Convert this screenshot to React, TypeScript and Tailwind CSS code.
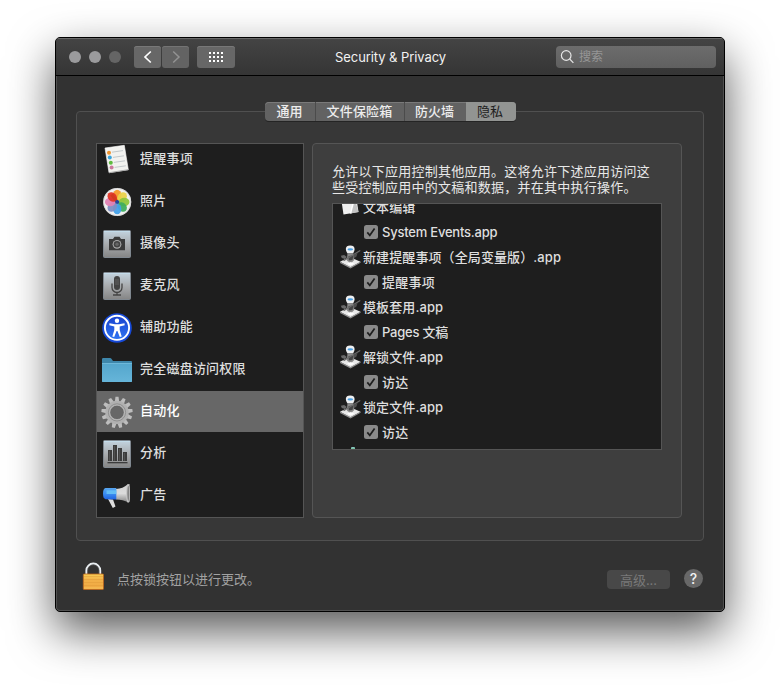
import type { ReactNode } from "react";

function RemindersIcon() {
  return (
    <>
      <path d="M4 4 23.3 1.3 27.3 25.7 8 28.7Z" fill="#f2f2ef" stroke="#fff" strokeWidth=".6" />
      <path d="M8 28.7 27.3 25.7" stroke="#a9a9a9" strokeWidth="1" />
      <g stroke="#b5bcc0" strokeWidth=".8">
        <path d="M11 8.2 22 6.6M12 13.4 23 11.8M12.8 18.4 24 16.8M13.6 23.4 24.8 21.8" />
      </g>
      <circle cx="8" cy="8.7" r="2" fill="#ee9430" />
      <circle cx="8.8" cy="13.6" r="2" fill="#38a4dc" />
      <circle cx="9.8" cy="18.7" r="2" fill="#5fbb3f" />
      <circle cx="10.6" cy="23.6" r="2" fill="#c97a9c" />
    </>
  );
}

const petals = ["#f59a28", "#ead24a", "#8fc63c", "#3fae5f", "#43a0e8", "#7d8fc4", "#e082b4", "#df3526"];

function PhotosIcon() {
  return (
    <>
      <circle cx="16.2" cy="16" r="14" fill="#f1f1f1" />
      <circle cx="16.2" cy="16" r="13.6" fill="none" stroke="#c9c9c9" strokeWidth=".6" />
      {petals.map((c, i) => (
        <ellipse key={c} cx="16.2" cy="9" rx="4.2" ry="5.3" fill={c} fillOpacity=".95" transform={`rotate(${i * 45} 16.2 16)`} />
      ))}
      <path d="M16.2 16 10.500 8.500" stroke="#d23b1e" strokeWidth="3" />
      <circle cx="16.2" cy="16" r="2.1" fill="#23459c" />
    </>
  );
}

function Plate() {
  return (
    <>
      <rect x="2.5" y="2.5" width="27" height="27" rx="1" fill="url(#plate)" stroke="#808890" />
      <path d="M3 3.5H29" stroke="#c3dcea" />
    </>
  );
}

function CameraIcon() {
  return (
    <>
      <Plate />
      <path d="M8 11h4l1.5-2.2h5L20 11h4v11.2H8Z" fill="#3b3b3b" />
      <circle cx="16" cy="16.3" r="4.4" fill="#a9a9a9" />
      <circle cx="16" cy="16.3" r="3.3" fill="#444" />
      <circle cx="16" cy="16.3" r="1.7" fill="#666" />
    </>
  );
}

function MicIcon() {
  return (
    <>
      <Plate />
      <rect x="13" y="6" width="6" height="14" rx="3" fill="#424242" />
      <path d="M14 10h4M14 12h4M14 14h4" stroke="#777" strokeWidth=".6" />
      <path d="M11 13.5v4a5 5 0 0 0 10 0v-4M16 22.5v2.7M12 25h8" fill="none" stroke="#444" strokeWidth="1.3" />
    </>
  );
}

function AccessibilityIcon() {
  return (
    <>
      <circle cx="16" cy="16" r="14.8" fill="#1649d8" />
      <circle cx="16" cy="15.8" r="12.1" fill="url(#blue)" stroke="#fff" strokeWidth="1.9" />
      <circle cx="16" cy="8.8" r="2.2" fill="#fff" />
      <path d="M8.5 11.3 14 12.2h4l5.5-.9.2 1.9-5 1.2v3.5l2 6.5-1.9.6L16.4 19h-.8l-2.4 6-1.9-.6 2-6.5v-3.5l-5-1.2Z" fill="#fff" />
    </>
  );
}

function FolderIcon() {
  return (
    <>
      <path d="M1 28V5.2Q1 4 2.2 4H9q1 0 1.8 1.2L12 7h18q1 0 1 1v20Z" fill="#3e87ab" />
      <path d="M1 9.2H31V27q0 1-1 1H2q-1 0-1-1Z" fill="url(#folder)" />
      <path d="M1 9.5H31" stroke="#7bc3e2" strokeWidth=".7" />
    </>
  );
}

const teeth = Array.from({ length: 13 }, (_, i) => (i * 360) / 13);

function GearIcon() {
  return (
    <>
      {teeth.map((a) => (
        <path key={a} d="M13.8 5.8 14.5.8h3l.7 5Z" fill="#bdbdbd" transform={`rotate(${a} 16 16.4)`} />
      ))}
      <circle cx="16" cy="16.4" r="9.4" fill="none" stroke="#b0b0b0" strokeWidth="4.6" />
      <circle cx="16" cy="16.4" r="8.6" fill="none" stroke="#8f8f8f" strokeWidth="1" />
      <circle cx="16" cy="16.4" r="7.2" fill="none" stroke="#c4c4c4" strokeWidth=".6" />
    </>
  );
}

function AnalyticsIcon() {
  return (
    <>
      <Plate />
      <path d="M7 12h4v11H7ZM12 7h4v16h-4ZM17 10h4v13h-4ZM22 14h4v9h-4Z" fill="#3c3c3c" />
      <path d="M8.5 13v10M13.5 8v15M18.5 11v12M23.5 15v8" stroke="#555" strokeWidth=".8" />
      <path d="M6.500 24.700H26.500" stroke="#333" strokeWidth="1.2" />
    </>
  );
}

function MegaphoneIcon() {
  return (
    <>
      <path d="M7 19 12 19.500 14.500 26.500 11.800 28Z" fill="#dedede" />
      <path d="M15 9Q22 8.500 26.500 4.500L28.500 4 29 21.500 27.500 22.800Q22 19.500 15 19.500Z" fill="url(#horn)" />
      <ellipse cx="27" cy="13.400" rx="1.900" ry="9.300" fill="#c6c6c6" />
      <ellipse cx="27.300" cy="13.400" rx="1" ry="7.600" fill="#858585" />
      <path d="M4.500 8Q2 8.500 2 13.500T4.500 19.200L15.300 19.600V8Z" fill="url(#cap)" />
      <path d="M5.500 10.300H15.300V14H5.500Z" fill="#63bdf6" />
    </>
  );
}

function AutomatorIcon() {
  return (
    <svg className="h-6 w-[22px] shrink-0" viewBox="0 0 22 24">
      <path d="M0 16.800 8 12.800 13 13.500 20.600 16.800 10.500 22.600Z" fill="#e9e9e9" />
      <path d="M0 16.800 10.500 22 20.600 16.800V17.800L10.500 23.600 0 17.900Z" fill="#8f8f8f" />
      <path d="M7.500 8.500h6l.8 6.500-3.500 3.500-4-3Z" fill="#8b8b8b" />
      <path d="M8.500 11 13.500 10.500 12.500 15 8.800 15.500Z" fill="#444" />
      <path d="M.8 10.800 4.200 10 6.800 12 5 14 1.800 13Z" fill="#6a6a6a" />
      <path d="M4 15.500 19.800 5.800" stroke="#6a6a6a" strokeWidth="1.300" strokeLinecap="round" />
      <path d="M13.800 9.800 17.500 7.800 16.500 11.500 13.500 13.500Z" fill="#505050" />
      <path d="M5.800 4Q6 .6 10.200.6T14.600 4Q14.600 5.800 13.200 8.300H7.300Q5.800 6 5.800 4Z" fill="#eef0f2" />
      <ellipse cx="10.300" cy="4.400" rx="2.800" ry="1.100" fill="#4a9fe4" />
      <path d="M7.700 8.800h5.200" stroke="#888" />
      <path d="M7 18.800 10.800 17 14.500 18.800 10.700 20.600Z" fill="#fff" />
    </svg>
  );
}

function TextEditIcon() {
  return (
    <svg className="h-6 w-[22px] shrink-0" viewBox="0 0 22 24">
      <path d="M1.500 6 16.500 4 18.500 17 3.500 19.500Z" fill="#efefef" />
      <path d="M14.500 3 18.500 17 10.500 18.500Z" fill="#c3c3c3" />
      <path d="M13.500 7 10.500 18.500" stroke="#fff" strokeWidth="1.500" />
    </svg>
  );
}

function Defs() {
  return (
    <svg className="absolute h-0 w-0">
      <defs>
        <linearGradient id="plate" x2="0" y2="1">
          <stop stopColor="#c3d4e0" />
          <stop offset=".5" stopColor="#a8abae" />
          <stop offset="1" stopColor="#858585" />
        </linearGradient>
        <linearGradient id="blue" x2="0" y2="1">
          <stop stopColor="#1942ce" />
          <stop offset="1" stopColor="#2f74f2" />
        </linearGradient>
        <linearGradient id="folder" x2="0" y2="1">
          <stop stopColor="#54a6cc" />
          <stop offset="1" stopColor="#66b5d9" />
        </linearGradient>
        <linearGradient id="horn" x2="0" y2="1">
          <stop stopColor="#d0d0d0" />
          <stop offset=".5" stopColor="#dcdcdc" />
          <stop offset="1" stopColor="#808080" />
        </linearGradient>
        <linearGradient id="cap" x2="0" y2="1">
          <stop stopColor="#58a6ee" />
          <stop offset=".5" stopColor="#3b8df2" />
          <stop offset="1" stopColor="#1f62e0" />
        </linearGradient>
        <linearGradient id="brass" x2="0" y2="1">
          <stop stopColor="#f7cf58" />
          <stop offset=".4" stopColor="#f2b048" />
          <stop offset="1" stopColor="#f0a842" />
        </linearGradient>
      </defs>
    </svg>
  );
}

const services: { label: string; icon: ReactNode; selected?: boolean }[] = [
  { label: "提醒事项", icon: <RemindersIcon /> },
  { label: "照片", icon: <PhotosIcon /> },
  { label: "摄像头", icon: <CameraIcon /> },
  { label: "麦克风", icon: <MicIcon /> },
  { label: "辅助功能", icon: <AccessibilityIcon /> },
  { label: "完全磁盘访问权限", icon: <FolderIcon /> },
  { label: "自动化", icon: <GearIcon />, selected: true },
  { label: "分析", icon: <AnalyticsIcon /> },
  { label: "广告", icon: <MegaphoneIcon /> },
];

const apps = [
  { name: "文本编辑", target: "System Events.app", icon: <TextEditIcon />, latin: true },
  { name: "新建提醒事项（全局变量版）.app", target: "提醒事项", icon: <AutomatorIcon /> },
  { name: "模板套用.app", target: "Pages 文稿", icon: <AutomatorIcon />, latin: true },
  { name: "解锁文件.app", target: "访达", icon: <AutomatorIcon /> },
  { name: "锁定文件.app", target: "访达", icon: <AutomatorIcon /> },
];

function TitleBar() {
  return (
    <header className="flex h-[38px] items-center border-b border-black bg-linear-to-b from-[#444444] to-[#353535] shadow-[inset_0_1px_0_#686868]">
      <div className="ml-[13px] flex gap-2">
        <span className="size-3 rounded-full bg-[#9b9b9d]" />
        <span className="size-3 rounded-full bg-[#9b9b9d]" />
        <span className="size-3 rounded-full bg-[#656565]" />
      </div>
      <div className="ml-[13px] flex gap-px">
        <button className="flex h-[22px] w-[27px] items-center justify-center rounded-[3px] bg-[#676767] shadow-[inset_0_1px_0_#787878]">
          <svg className="size-4" viewBox="0 0 16 16" fill="none" stroke="#fff" strokeWidth="1.700">
            <path d="M10.800 2.500 5 8l5.800 5.500" />
          </svg>
        </button>
        <button className="flex h-[22px] w-[27px] items-center justify-center rounded-[3px] bg-[#636363] shadow-[inset_0_1px_0_#747474]">
          <svg className="size-4" viewBox="0 0 16 16" fill="none" stroke="#929292" strokeWidth="1.500">
            <path d="M5.200 2.500 11 8l-5.800 5.500" />
          </svg>
        </button>
      </div>
      <button className="ml-2 flex h-[22px] w-[38px] items-center justify-center rounded-[3px] bg-[#676767] shadow-[inset_0_1px_0_#787878]">
        <svg className="h-[10px] w-[14px]" viewBox="0 0 14 10" stroke="#fff" strokeWidth="2" strokeDasharray="2 2">
          <path d="M0 1h14M0 5h14M0 9h14" />
        </svg>
      </button>
      <h1 className="ml-[100px] w-[111px] pt-[2px] text-[13px] font-normal tracking-[-0.07px] whitespace-nowrap text-[#f2f2f2]">Security &amp; Privacy</h1>
      <div className="mr-2 ml-auto flex h-[22px] w-[160px] items-center rounded-[4px] bg-linear-to-b from-[#6c6c6c] to-[#606060] pl-[4px] text-[12px] text-[#969696]">
        <svg className="mr-1 size-[15px]" viewBox="0 0 15 15" fill="none" stroke="#e5e5e5" strokeWidth="1.200">
          <circle cx="6.200" cy="6.500" r="4.800" />
          <path d="m9.700 10 3.700 3.800" />
        </svg>
        <span className="pt-px">搜索</span>
      </div>
    </header>
  );
}

function Tabs() {
  return (
    <nav className="mx-auto -mt-[10px] flex h-[19px] w-[251px] overflow-hidden rounded-[4px] bg-[#626262] text-[13px] leading-[19px] font-medium text-[#ececec] shadow-[0_1px_0_#242424,inset_0_1px_0_#7a7a7a]">
      <span className="w-[51px] border-r border-[#4b4b4b] text-center">通用</span>
      <span className="w-[89px] border-r border-[#4b4b4b] text-center tracking-[0.2px]">文件保险箱</span>
      <span className="w-[61px] pr-px text-center">防火墙</span>
      <span className="w-[50px] bg-[#929492] pr-px text-center font-normal text-[#202020]">隐私</span>
    </nav>
  );
}

function Sidebar() {
  return (
    <aside className="h-[375px] w-[208px] overflow-hidden border border-[#555555] bg-[#1e1e1e]">
      <ul className="-mt-[5px]">
        {services.map((s) => (
          <li key={s.label} className={s.selected ? "mb-px flex h-[41px] bg-[#676767] text-white" : "mb-px flex h-[41px] text-[#dedede]"}>
            <svg className="mt-[5px] ml-[4px] size-8 shrink-0" viewBox="0 0 32 32">
              {s.icon}
            </svg>
            <span className="ml-[7px] text-[13px] leading-[39px] font-medium tracking-[0.22px]">{s.label}</span>
          </li>
        ))}
      </ul>
    </aside>
  );
}

function PrivacyPane() {
  return (
    <section className="h-[375px] w-[370px] rounded-[4px] border border-[#555555] bg-[#3e3e3e] pl-[19px]">
      <p className="mt-[19px] text-[13px] leading-4 tracking-[0.25px] whitespace-nowrap text-[#e8e8e8]">
        允许以下应用控制其他应用。这将允许下述应用访问这
        <br />
        些受控制应用中的文稿和数据，并在其中执行操作。
      </p>
      <div className="mt-[8px] h-[247px] w-[330px] overflow-hidden border border-[#555555] bg-[#1e1e1e] text-[13px] font-medium text-[#dedede]">
        <div className="-mt-[9px]">
          {apps.map((a) => (
            <div key={a.name}>
              <div className="flex h-[25px] pl-[7px] leading-[25px]">
                {a.icon}
                <span className="ml-[1px] tracking-[0.1px]">{a.name}</span>
              </div>
              <div className="flex h-[25px] items-center pl-[31px]">
                <svg className="mr-1 -mt-px size-[14px]" viewBox="0 0 14 14">
                  <rect width="14" height="14" rx="2.500" fill="#8a8a8a" />
                  <path d="M3.300 7.400 5.800 10.300 10.600 3.500" fill="none" stroke="#1e1e1e" strokeWidth="1.700" />
                </svg>
                <span className={a.latin ? "tracking-[-0.22px]" : "tracking-[0.25px]"}>{a.target}</span>
              </div>
            </div>
          ))}
          <span className="mt-[2px] ml-[18px] block h-1 w-1 rounded-t-[1px] bg-linear-to-b from-[#8fc4cf] to-[#55c152]" />
        </div>
      </div>
    </section>
  );
}

function Footer() {
  return (
    <footer className="flex h-[70px] items-start pr-[20px] pl-[24px]">
      <svg className="mt-[20px] h-[30px] w-[24px]" viewBox="0 0 24 30">
        <path d="M5.400 14V9.500a6.900 6.900 0 0 1 13.800 0V14" fill="none" stroke="#e9eef1" strokeWidth="2" />
        <path d="M6.600 14V9.500a5.700 5.700 0 0 1 11.400 0V14" fill="none" stroke="#666" strokeWidth=".6" />
        <rect x="2.300" y="13" width="20.200" height="15.500" rx=".8" fill="url(#brass)" stroke="#bd651b" strokeWidth=".8" />
        <path d="M3 15.500h19M3 18.500h19M3 21.500h19M3 24.500h19" stroke="#e09a38" strokeWidth=".5" />
        <path d="M3 27h19" stroke="#f6c45e" />
      </svg>
      <p className="mt-[28px] ml-[12px] text-[13px] leading-5 text-[#a2a2a2]">点按锁按钮以进行更改。</p>
      <button className="mt-[29px] ml-auto h-[19px] w-[63px] rounded-[4px] bg-[#484848] text-[13px] leading-[18px] text-[#797979]">高级...</button>
      <button className="mt-[28px] ml-[14px] size-[19px] rounded-full bg-[#686868] text-[14px] leading-[19px] font-medium text-[#f2f2f2]">?</button>
    </footer>
  );
}

export default function App() {
  return (
    <div className="flex h-[685px] w-[780px] overflow-hidden bg-white pt-[37px] pl-[55px] font-['Inter','Noto_Sans_CJK_SC',sans-serif]">
      <Defs />
      <main className="h-[575px] w-[670px] rounded-[5px] border border-black bg-[#323232] shadow-[0_19px_46px_rgba(0,0,0,0.66)]">
        <div className="h-full overflow-hidden rounded-[4px]">
          <TitleBar />
          <div className="h-[535px] rounded-b-[4px] border-x border-b border-[#505050] pt-[35px]">
            <div className="mx-auto h-[430px] w-[628px] rounded-[4px] border border-[#505050] bg-[#373737]">
              <Tabs />
              <div className="mt-[22px] flex gap-2 pl-[19px]">
                <Sidebar />
                <PrivacyPane />
              </div>
            </div>
            <Footer />
          </div>
        </div>
      </main>
    </div>
  );
}
